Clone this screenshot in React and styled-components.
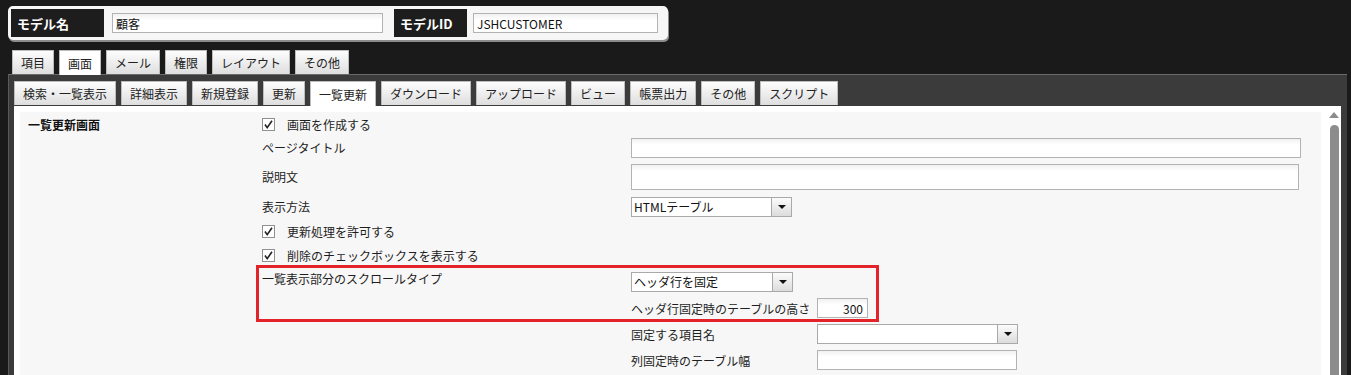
import React from "react";
import styled, { createGlobalStyle } from "styled-components";

const GlobalStyle = createGlobalStyle`
  html, body, #root {
    margin: 0;
    padding: 0;
    height: 100%;
  }
  body {
    background: #1a1a1a;
    font-family: "Noto Sans CJK JP", "Noto Sans", sans-serif;
    font-size: 12px;
    color: #1e1e1e;
    overflow: hidden;
  }
  * {
    box-sizing: border-box;
  }
`;

const Page = styled.div`
  height: 100vh;
  display: flex;
  flex-direction: column;
  padding: 6px 4px 0 8px;
  overflow: hidden;
`;

const ModelBar = styled.div`
  width: 660px;
  height: 34px;
  display: flex;
  padding: 1px;
  background: #f6f6f6;
  border: 2px solid #f6f6f6;
  border-radius: 5px;
  box-shadow: 1px 2px 0 #8c8c8c;
`;

const BarLabel = styled.div`
  width: ${(props) => props.$width}px;
  display: flex;
  align-items: center;
  padding-left: 6px;
  background: #1d1d1d;
  color: #fff;
  font-weight: bold;
  font-size: 13px;
`;

const BarField = styled.div`
  display: flex;
  align-items: center;
  padding: ${(props) => props.$pad};
`;

const TextInput = styled.input`
  width: ${(props) => props.$width}px;
  height: ${(props) => props.$height || 20}px;
  border: 1px solid #b3b3b3;
  background: linear-gradient(#f1f1f1, #fff 6px);
  font-family: inherit;
  font-size: 12px;
  color: #111;
  padding: 0 4px 0 3px;
  text-align: ${(props) => props.$align || "left"};
  outline: none;
`;

const TextArea = styled.textarea`
  width: ${(props) => props.$width}px;
  height: 26px;
  border: 1px solid #b3b3b3;
  background: linear-gradient(#f1f1f1, #fff 6px);
  resize: none;
  font-family: inherit;
  outline: none;
`;

const TabRow = styled.div`
  display: flex;
  gap: 5px;
  padding-left: ${(props) => props.$indent}px;
  margin-top: ${(props) => props.$top}px;
  margin-bottom: -1px;
  position: relative;
  z-index: 1;
`;

const Tab = styled.div`
  height: ${(props) => (props.$active ? 25 : 24)}px;
  padding: 0 8px;
  display: flex;
  align-items: center;
  border: 1px solid #bdbdbd;
  border-bottom: none;
  background: ${(props) =>
    props.$active ? "#fff" : "linear-gradient(#fdfdfd, #dedede)"};
  color: #222;
  white-space: nowrap;
`;

const Panel = styled.div`
  flex: 1;
  display: flex;
  flex-direction: column;
  background: #3b3b3b;
  border-top: 1px solid #6a6a6a;
  border-left: 1px solid #5a5a5a;
  padding: 6px 6px 0 5px;
  min-height: 0;
`;

const SubTabRow = styled(TabRow)`
  margin-bottom: 0;
`;

const Frame = styled.div`
  flex: 1;
  display: flex;
  background: #fff;
  padding: 6px 0 0 6px;
  min-height: 0;
`;

const Content = styled.div`
  flex: 1;
  display: flex;
  background: #f7f7f7;
  padding: 0 0 0 8px;
  overflow: hidden;
`;

const SectionTitle = styled.div`
  width: 234px;
  line-height: 24px;
  padding-top: 1px;
  font-weight: bold;
  color: #111;
`;

const Form = styled.div`
  display: flex;
  flex-direction: column;
`;

const CheckRow = styled.label`
  height: 24px;
  display: flex;
  align-items: center;
  gap: 12px;
`;

const CheckBox = styled.span`
  width: 13px;
  height: 13px;
  border: 1px solid #909090;
  background: #fff;
  display: flex;
  align-items: center;
  justify-content: center;
`;

const FieldRow = styled.div`
  display: grid;
  grid-template-columns: 369px 1fr;
  align-items: ${(props) => (props.$top ? "start" : "center")};
  min-height: 24px;
  padding: ${(props) => props.$pad || "0"};
  position: relative;
`;

const FieldLabel = styled.div`
  line-height: 18px;
  margin-top: ${(props) => props.$top || 0}px;
`;

const SelectBox = styled.div`
  width: ${(props) => props.$width}px;
  height: 20px;
  display: flex;
  border: 1px solid #a9a9a9;
  background: #fff;
`;

const SelectText = styled.div`
  flex: 1;
  padding-left: 2px;
  line-height: 18px;
  color: #111;
`;

const SelectButton = styled.div`
  width: 20px;
  border-left: 1px solid #a9a9a9;
  background: linear-gradient(#fbfbfb, #dcdcdc);
  display: flex;
  align-items: center;
  justify-content: center;

  &::after {
    content: "";
    border-left: 4px solid transparent;
    border-right: 4px solid transparent;
    border-top: 4px solid #111;
  }
`;

const SubFields = styled.div`
  display: flex;
  flex-direction: column;
  gap: 6px;
`;

const SubField = styled.div`
  display: grid;
  grid-template-columns: 186px auto;
  align-items: center;
  justify-content: start;
`;

const Highlight = styled.div`
  position: absolute;
  top: -2px;
  left: -6px;
  width: 623px;
  height: 57px;
  border: 3px solid #e3232a;
  pointer-events: none;
`;

const ScrollTrack = styled.div`
  width: 20px;
  display: flex;
  flex-direction: column;
  align-items: center;
  padding: 0 2px 0 8px;
`;

const ScrollArrow = styled.div`
  width: 0;
  height: 0;
  border-left: 5px solid transparent;
  border-right: 5px solid transparent;
  border-bottom: 6px solid #8c8c8c;
`;

const ScrollThumb = styled.div`
  flex: 1;
  width: 9px;
  margin-top: 7px;
  border-radius: 5px 5px 0 0;
  background: #8c8c8c;
`;

const Check = () => (
  <svg width="11" height="11" viewBox="0 0 11 11">
    <path d="M2 5.5 L4.2 8.6 L9 1.8" fill="none" stroke="#222" strokeWidth="1.6" />
  </svg>
);

const CheckItem = ({ children }) => (
  <CheckRow>
    <CheckBox>
      <Check />
    </CheckBox>
    {children}
  </CheckRow>
);

const Select = ({ width, value }) => (
  <SelectBox $width={width}>
    <SelectText>{value}</SelectText>
    <SelectButton />
  </SelectBox>
);

const mainTabs = ["項目", "画面", "メール", "権限", "レイアウト", "その他"];
const screenTabs = [
  "検索・一覧表示",
  "詳細表示",
  "新規登録",
  "更新",
  "一覧更新",
  "ダウンロード",
  "アップロード",
  "ビュー",
  "帳票出力",
  "その他",
  "スクリプト",
];

const App = () => {
  return (
    <Page>
      <GlobalStyle />
      <ModelBar>
        <BarLabel $width={93}>モデル名</BarLabel>
        <BarField $pad="0 11px 0 8px">
          <TextInput $width={271} defaultValue="顧客" />
        </BarField>
        <BarLabel $width={73}>モデルID</BarLabel>
        <BarField $pad="0 0 0 6px">
          <TextInput $width={185} defaultValue="JSHCUSTOMER" />
        </BarField>
      </ModelBar>

      <TabRow $indent={4} $top={10}>
        {mainTabs.map((t) => (
          <Tab key={t} $active={t === "画面"}>
            {t}
          </Tab>
        ))}
      </TabRow>

      <Panel>
        <SubTabRow $indent={0} $top={0}>
          {screenTabs.map((t) => (
            <Tab key={t} $active={t === "一覧更新"}>
              {t}
            </Tab>
          ))}
        </SubTabRow>

        <Frame>
          <Content>
            <SectionTitle>一覧更新画面</SectionTitle>
            <Form>
              <CheckItem>画面を作成する</CheckItem>
              <FieldRow>
                <FieldLabel>ページタイトル</FieldLabel>
                <TextInput $width={670} />
              </FieldRow>
              <FieldRow $pad="4px 0 5px">
                <FieldLabel>説明文</FieldLabel>
                <TextArea $width={668} />
              </FieldRow>
              <FieldRow>
                <FieldLabel>表示方法</FieldLabel>
                <Select width={161} value="HTMLテーブル" />
              </FieldRow>
              <CheckItem>更新処理を許可する</CheckItem>
              <CheckItem>削除のチェックボックスを表示する</CheckItem>
              <FieldRow $top $pad="5px 0 0">
                <FieldLabel $top={-2}>一覧表示部分のスクロールタイプ</FieldLabel>
                <SubFields>
                  <Select width={162} value="ヘッダ行を固定" />
                  <SubField>
                    <span>ヘッダ行固定時のテーブルの高さ</span>
                    <TextInput $width={51} $align="right" defaultValue="300" />
                  </SubField>
                  <SubField>
                    <span>固定する項目名</span>
                    <Select width={201} value="" />
                  </SubField>
                  <SubField>
                    <span>列固定時のテーブル幅</span>
                    <TextInput $width={200} />
                  </SubField>
                </SubFields>
                <Highlight />
              </FieldRow>
            </Form>
          </Content>
          <ScrollTrack>
            <ScrollArrow />
            <ScrollThumb />
          </ScrollTrack>
        </Frame>
      </Panel>
    </Page>
  );
};

export default App;
